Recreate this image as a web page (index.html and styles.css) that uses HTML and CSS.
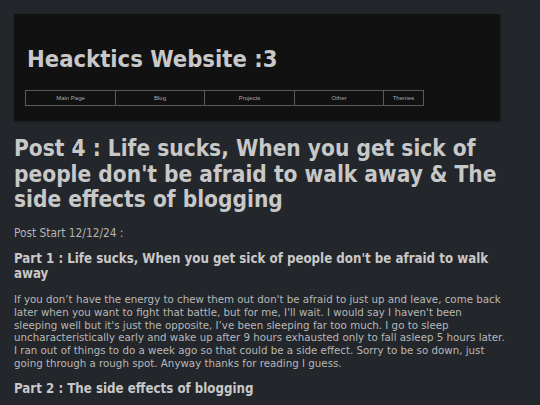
FILE: index.html
```html
<!DOCTYPE html>
<html>
<head>
<meta charset="utf-8">
<link rel="stylesheet" href="styles.css">
</head>
<body>
<div class="page">
  <header class="banner">
    <h1 class="site-title">Heacktics Website :3</h1>
    <nav class="nav">
      <a class="nav-item w91" href="#">Main Page</a>
      <a class="nav-item w90" href="#">Blog</a>
      <a class="nav-item w91" href="#">Projects</a>
      <a class="nav-item w90" href="#">Other</a>
      <a class="nav-item w41" href="#">Themes</a>
    </nav>
  </header>
  <main class="post">
    <h1 class="post-title">Post 4 : Life sucks, When you get sick of people don't be afraid to walk away &amp; The side effects of blogging</h1>
    <p class="meta">Post Start 12/12/24 :</p>
    <h2 class="part part-first">Part 1 : Life sucks, When you get sick of people don't be afraid to walk away</h2>
    <p class="body-text">If you don’t have the energy to chew them out don't be afraid to just up and leave, come back later when you want to fight that battle, but for me, I'll wait. I would say I haven't been sleeping well but it's just the opposite, I’ve been sleeping far too much. I go to sleep uncharacteristically early and wake up after 9 hours exhausted only to fall asleep 5 hours later. I ran out of things to do a week ago so that could be a side effect. Sorry to be so down, just going through a rough spot. Anyway thanks for reading I guess.</p>
    <h2 class="part">Part 2 : The side effects of blogging</h2>
  </main>
</div>
</body>
</html>
```

FILE: styles.css
```css
html, body {
  margin: 0;
  padding: 0;
  background: #23262b;
}
body {
  font-family: "DejaVu Sans Condensed", "DejaVu Sans", sans-serif;
  color: #c8c8c8;
}
.page {
  padding: 14px 0 0 14px;
}
.banner {
  width: 486px;
  box-sizing: border-box;
  background: #111111;
  padding: 31px 11px 15px 11px;
  box-shadow: 1px 1px 2px rgba(0,0,0,0.3);
}
.site-title {
  margin: 0 0 17px 2px;
  font-size: 23.6px;
  line-height: 28px;
  font-weight: bold;
  color: #c8c8c8;
}
.nav {
  display: flex;
}
.nav-item {
  box-sizing: border-box;
  height: 16px;
  border: 1px solid #5a5a5a;
  margin-left: -1px;
  display: flex;
  align-items: center;
  justify-content: center;
  font-family: "Liberation Sans", Arial, sans-serif;
  font-size: 6px;
  color: #a8a8a8;
  text-decoration: none;
}
.nav-item:first-child { margin-left: 0; }
.w91 { width: 91px; }
.w90 { width: 90px; }
.w41 { width: 41px; }
.post {
  width: 491px;
}
.post-title {
  margin: 15px 0 0 0;
  font-size: 22.5px;
  line-height: 25.5px;
  font-weight: bold;
  color: #c8c8c8;
}
.meta {
  margin: 13px 0 0 0;
  font-size: 11.8px;
  line-height: 14px;
  color: #b4b4b4;
}
.part {
  margin: 11px 0 0 0;
  font-size: 13.2px;
  line-height: 15.6px;
  font-weight: bold;
  color: #c8c8c8;
}
.body-text {
  margin: 11.5px 0 0 0;
  font-family: "DejaVu Sans", sans-serif;
  font-size: 10.27px;
  line-height: 12.73px;
  color: #b8b8b8;
}
```
